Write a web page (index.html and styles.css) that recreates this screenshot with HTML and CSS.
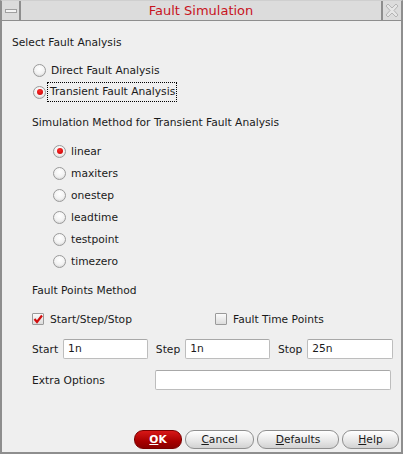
FILE: index.html
```html
<!DOCTYPE html>
<html>
<head>
<meta charset="utf-8">
<link rel="stylesheet" href="styles.css">
</head>
<body>
<div class="window">
  <div class="titlebar">
    <div class="tb-btn tb-min"><span class="min-glyph"></span></div>
    <div class="tb-title">Fault Simulation</div>
    <div class="tb-btn tb-close">
      <svg width="16" height="16" viewBox="0 0 16 16"><path d="M2 3 L4 1 L8 5 L12 1 L14 3 L10 7.5 L14 12 L12 14 L8 10 L4 14 L2 12 L6 7.5 Z" fill="#e6e6e6" stroke="#b4b4b4" stroke-width="1"/></svg>
    </div>
  </div>
  <div class="content">
    <div class="row label l1">Select Fault Analysis</div>
    <div class="group g1">
      <div class="row opt"><span class="radio"></span><span class="txt">Direct Fault Analysis</span></div>
      <div class="row opt"><span class="radio on"></span><span class="txt focus">Transient Fault Analysis</span></div>
    </div>
    <div class="row label l2">Simulation Method for Transient Fault Analysis</div>
    <div class="group g2">
      <div class="row opt"><span class="radio on"></span><span class="txt">linear</span></div>
      <div class="row opt"><span class="radio"></span><span class="txt">maxiters</span></div>
      <div class="row opt"><span class="radio"></span><span class="txt">onestep</span></div>
      <div class="row opt"><span class="radio"></span><span class="txt">leadtime</span></div>
      <div class="row opt"><span class="radio"></span><span class="txt">testpoint</span></div>
      <div class="row opt"><span class="radio"></span><span class="txt">timezero</span></div>
    </div>
    <div class="row label l3">Fault Points Method</div>
    <div class="row checks">
      <div class="chk-item c1"><span class="check on"><svg width="10" height="10" viewBox="0 0 10 10"><path d="M1.5 5 L4 8 L9 1.5" fill="none" stroke="#d10f0f" stroke-width="2.2"/></svg></span><span class="txt">Start/Step/Stop</span></div>
      <div class="chk-item c2"><span class="check"></span><span class="txt">Fault Time Points</span></div>
    </div>
    <div class="row fields">
      <span class="flabel">Start</span><span class="field f1">1n</span>
      <span class="flabel">Step</span><span class="field f2">1n</span>
      <span class="flabel">Stop</span><span class="field f3">25n</span>
    </div>
    <div class="row extra">
      <span class="flabel xl">Extra Options</span><span class="field fx"></span>
    </div>
    <div class="spacer"></div>
    <div class="buttons">
      <span class="btn ok"><u>O</u>K</span>
      <span class="btn cancel"><u>C</u>ancel</span>
      <span class="btn defaults"><u>D</u>efaults</span>
      <span class="btn help"><u>H</u>elp</span>
    </div>
  </div>
</div>
</body>
</html>
```

FILE: styles.css
```css
* { box-sizing: border-box; }
html, body { margin: 0; padding: 0; }
body {
  width: 403px;
  height: 454px;
  font-family: "DejaVu Sans", sans-serif;
  font-size: 10.7px;
  color: #1a1a1a;
  background: #efefef;
}
.window {
  width: 403px;
  height: 454px;
  display: flex;
  flex-direction: column;
  border-left: 2px solid #8e8e8e;
  border-right: 2px solid #8e8e8e;
  border-bottom: 2px solid #8e8e8e;
  border-top: 1px solid #cfcfcf;
  background: #efefef;
}
.titlebar {
  height: 20px;
  display: flex;
  background: #dcdcdc;
  border-bottom: 1px solid #8e8e8e;
}
.tb-btn {
  width: 19px;
  display: flex;
  align-items: center;
  justify-content: center;
}
.tb-min { border-right: 2px solid #8e8e8e; }
.tb-close { border-left: 2px solid #8e8e8e; width: 20px; }
.min-glyph {
  width: 12px;
  height: 4px;
  background: #f4f4f4;
  border: 1px solid #a0a0a0;
  margin-top: 1px;
}
.tb-title {
  flex: 1;
  text-align: center;
  color: #c8141e;
  font-size: 13px;
  line-height: 19px;
}
.content {
  flex: 1;
  display: flex;
  flex-direction: column;
  padding: 10px 0 0 10px;
}
.row {
  height: 22px;
  display: flex;
  align-items: center;
}
.label.l2, .label.l3 { padding-left: 20px; }
.l2 { margin-top: 8px; }
.l3 { margin-top: 7px; }
.g1 { margin-top: 6px; padding-left: 21px; }
.g2 { margin-top: 7px; padding-left: 41px; }
.radio {
  width: 13px;
  height: 13px;
  border-radius: 50%;
  border: 1px solid #9a9a9a;
  background: radial-gradient(circle at 50% 35%, #ffffff 0%, #f2f2f2 55%, #c8c8c8 100%);
  display: inline-flex;
  align-items: center;
  justify-content: center;
  margin-right: 4px;
}
.radio.on::after {
  content: "";
  width: 6px;
  height: 6px;
  border-radius: 50%;
  background: radial-gradient(circle at 40% 35%, #ff2a2a, #c00000);
}
.txt { padding: 0 1px; }
.focus {
  border: 1px dotted #000;
  height: 20px;
  line-height: 18px;
  padding: 0 1px 0 2px;
  margin-left: -3px;
}
.checks { margin-top: 7px; padding-left: 20px; }
.chk-item { display: flex; align-items: center; }
.c1 { width: 183px; }
.check {
  width: 12px;
  height: 12px;
  border: 1px solid #9a9a9a;
  border-radius: 1px;
  background: linear-gradient(#fbfbfb, #dcdcdc);
  display: inline-flex;
  align-items: center;
  justify-content: center;
  margin-right: 5px;
}
.fields { margin-top: 8px; padding-left: 20px; }
.flabel { margin-right: 5px; }
.field {
  height: 20px;
  background: #fff;
  border: 1px solid #bdbdbd;
  border-top-color: #a8a8a8;
  border-radius: 2px;
  padding-left: 4px;
  line-height: 18px;
  margin-right: 8px;
}
.f1, .f2 { width: 85px; }
.f3 { width: 86px; }
.extra { margin-top: 9px; padding-left: 20px; }
.xl { width: 118px; }
.fx { width: 236px; }
.spacer { flex: 1; }
.buttons {
  display: flex;
  justify-content: flex-end;
  gap: 3px;
  padding-right: 2px;
  margin-bottom: 3px;
}
.btn {
  height: 19px;
  border-radius: 9px;
  border: 1px solid #8f8f8f;
  background: linear-gradient(#ffffff, #e6e6e6 60%, #d2d2d2);
  display: inline-flex;
  align-items: center;
  justify-content: center;
}
.ok {
  width: 48px;
  background: linear-gradient(#d81818, #a80000 60%, #8a0000);
  border-color: #7a0000;
  color: #fff;
  font-weight: bold;
}
.cancel { width: 69px; }
.defaults { width: 82px; }
.help { width: 57px; }
```
